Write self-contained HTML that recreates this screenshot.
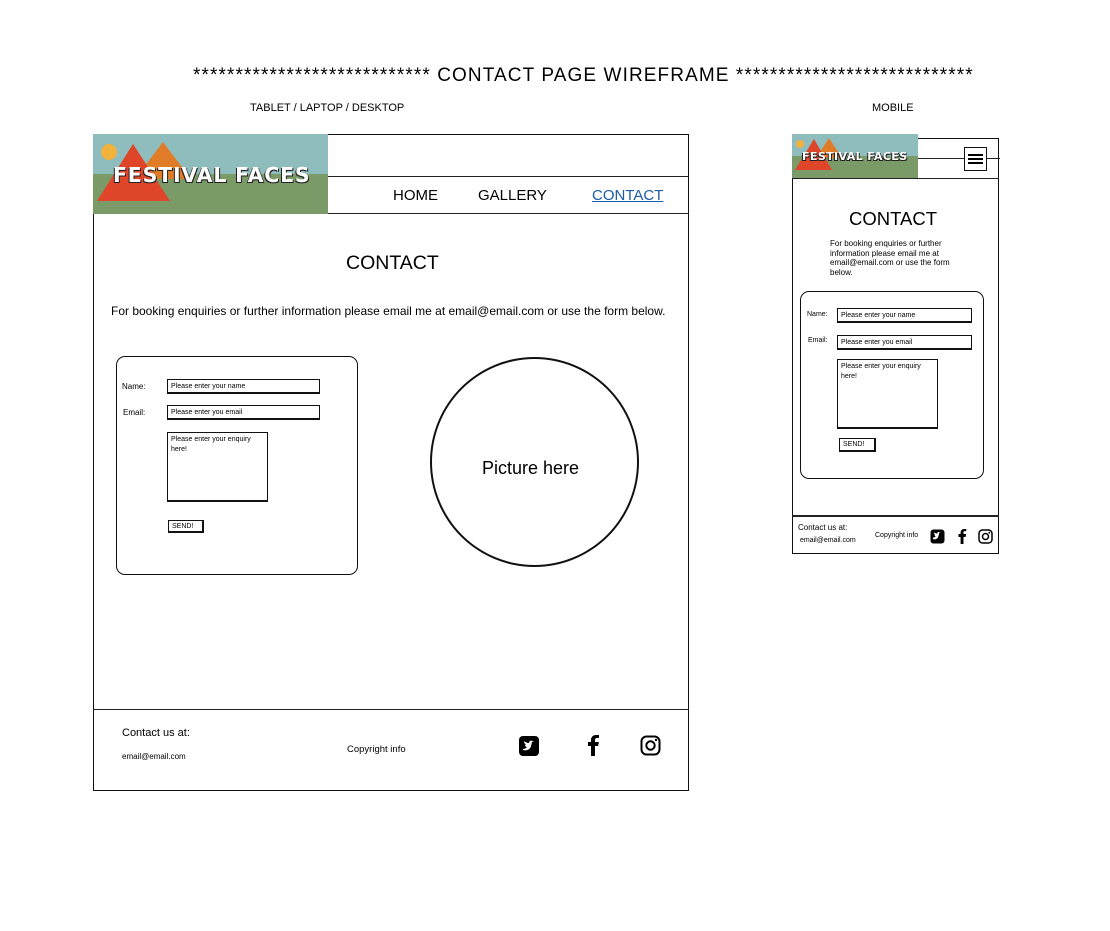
<!DOCTYPE html><html><head><style>
body{margin:0;width:1110px;height:931px;background:#fff;position:relative;font-family:"Liberation Sans",sans-serif;color:#000;overflow:hidden}
.a{position:absolute;white-space:nowrap}
.b{position:absolute;box-sizing:border-box;border:1.5px solid #111}
.in{position:absolute;box-sizing:border-box;border:1.3px solid #111;border-bottom-width:2px;font-size:7px;padding:1px 3px;line-height:10px;background:#fff}
.hl{position:absolute;height:0;border-top:1.5px solid #222}
.logo{position:absolute;overflow:hidden;background:linear-gradient(#8fbcbd 0 50%,#7a9a68 50%)}
.logo b{font-family:"DejaVu Sans",sans-serif;font-weight:900;color:#fff;position:absolute;text-shadow:1px 1px 0 #222,-1px 1px 0 #222;letter-spacing:1px}
</style></head><body>
<div class="a" style="left:193px;top:65px;font-size:19px;letter-spacing:1.1px">**************************** CONTACT PAGE WIREFRAME ****************************</div>
<div class="a" style="left:250px;top:102px;font-size:11px">TABLET / LAPTOP / DESKTOP</div>
<div class="a" style="left:872px;top:102px;font-size:11px">MOBILE</div>

<!-- desktop -->
<div class="b" style="left:93px;top:134px;width:596px;height:657px"></div>
<div class="hl" style="left:328px;top:176px;width:360px"></div>
<div class="hl" style="left:93px;top:213px;width:596px"></div>
<div class="logo" style="left:93px;top:134px;width:235px;height:80px">
<svg width="235" height="80" style="position:absolute;left:0;top:0"><circle cx="16" cy="18" r="8" fill="#f2b33d"/><polygon points="70,8 98,45 42,45" fill="#e07c27"/><polygon points="40,10 77,67 4,67" fill="#df4529"/></svg>
<b style="left:20px;top:29px;font-size:20.5px;letter-spacing:0.8px">FESTIVAL FACES</b></div>
<div class="a" style="left:393px;top:187px;font-size:15px">HOME</div>
<div class="a" style="left:478px;top:187px;font-size:15px">GALLERY</div>
<div class="a" style="left:592px;top:187px;font-size:15px;color:#1a5ca8;text-decoration:underline">CONTACT</div>
<div class="a" style="left:346px;top:252px;font-size:19.5px">CONTACT</div>
<div class="a" style="left:111px;top:304px;font-size:12px">For booking enquiries or further information please email me at email@email.com or use the form below.</div>
<div class="b" style="left:116px;top:356px;width:242px;height:219px;border-radius:9px"></div>
<div class="a" style="left:122px;top:382px;font-size:8px">Name:</div>
<div class="in" style="left:167px;top:379px;width:153px;height:15px;padding-top:2px">Please enter your name</div>
<div class="a" style="left:123px;top:408px;font-size:8px">Email:</div>
<div class="in" style="left:167px;top:405px;width:153px;height:15px;padding-top:2px">Please enter you email</div>
<div class="in" style="left:167px;top:432px;width:101px;height:70px;white-space:normal;padding-top:2px">Please enter your enquiry here!</div>
<div class="in" style="left:168px;top:520px;width:36px;height:13px;border-right-width:2.5px;font-size:7px;line-height:9px">SEND!</div>
<div class="b" style="left:430px;top:357px;width:209px;height:210px;border-radius:50%;border-width:2px"></div>
<div class="a" style="left:482px;top:458px;font-size:18px">Picture here</div>
<div class="hl" style="left:93px;top:709px;width:596px"></div>
<div class="a" style="left:122px;top:727px;font-size:11px">Contact us at:</div>
<div class="a" style="left:122px;top:752px;font-size:8px">email@email.com</div>
<div class="a" style="left:347px;top:744px;font-size:9.5px">Copyright info</div>
<svg class="a" style="left:518px;top:735px" width="22" height="22"><rect x="1" y="1" width="20" height="20" rx="4" fill="#000"/><path d="M5 15c3 1 7 0 8-4l1-4 2-1-2 0c-1-1-3 0-3 2-2 0-4-1-5-2 0 2 1 3 2 4l-1 0c0 1 1 2 2 2-1 1-2 2-4 2z" fill="#fff"/></svg>
<svg class="a" style="left:586px;top:734px" width="14" height="22"><path d="M9 22V12h3l1-4H9V6c0-1 .5-2 2-2h2V1h-3C7 1 5 3 5 6v2H2v4h3v10z" fill="#000"/></svg>
<svg class="a" style="left:640px;top:735px" width="21" height="21"><rect x="1.5" y="1.5" width="18" height="18" rx="5" fill="none" stroke="#000" stroke-width="2"/><circle cx="10.5" cy="10.5" r="4.2" fill="none" stroke="#000" stroke-width="2"/><circle cx="16" cy="5" r="1.2"/></svg>

<!-- mobile -->
<div class="b" style="left:792px;top:138px;width:207px;height:416px"></div>
<div class="hl" style="left:918px;top:158px;width:82px"></div>
<div class="hl" style="left:792px;top:178px;width:207px"></div>
<div class="logo" style="left:792px;top:134px;width:126px;height:44px">
<svg width="126" height="44" style="position:absolute;left:0;top:0"><circle cx="8" cy="10" r="4" fill="#f2b33d"/><polygon points="37,4 50,24 24,24" fill="#e07c27"/><polygon points="22,5 40,36 3,36" fill="#df4529"/></svg>
<b style="left:10px;top:16px;font-size:11px;letter-spacing:0.4px">FESTIVAL FACES</b></div>
<div class="b" style="left:964px;top:147px;width:23px;height:24px;background:#fff"></div>
<div style="position:absolute;left:968px;top:154px;width:15px;height:2px;background:#000;box-shadow:0 4px 0 #000,0 8px 0 #000"></div>
<div class="a" style="left:849px;top:208px;font-size:18.5px">CONTACT</div>
<div class="a" style="left:830px;top:239px;font-size:8px;line-height:9.5px">For booking enquiries or further<br>information please email me at<br>email@email.com or use the form<br>below.</div>
<div class="b" style="left:800px;top:291px;width:184px;height:188px;border-radius:9px"></div>
<div class="a" style="left:807px;top:311px;font-size:7px">Name:</div>
<div class="in" style="left:837px;top:308px;width:135px;height:15px;padding-top:2px">Please enter your name</div>
<div class="a" style="left:808px;top:337px;font-size:7px">Email:</div>
<div class="in" style="left:837px;top:335px;width:135px;height:15px;padding-top:2px">Please enter you email</div>
<div class="in" style="left:837px;top:359px;width:101px;height:70px;white-space:normal;padding-top:2px">Please enter your enquiry here!</div>
<div class="in" style="left:839px;top:438px;width:37px;height:14px;border-right-width:2.5px;font-size:7px;line-height:10px">SEND!</div>
<div class="hl" style="left:792px;top:515px;width:207px;border-top-width:2px"></div>
<div class="a" style="left:798px;top:523px;font-size:8px">Contact us at:</div>
<div class="a" style="left:800px;top:537px;font-size:7px">email@email.com</div>
<div class="a" style="left:875px;top:532px;font-size:7px">Copyright info</div>
<svg class="a" style="left:930px;top:529px" width="15" height="15"><rect x="0.5" y="0.5" width="14" height="14" rx="3" fill="#000"/><path d="M3 10c2 1 5 0 5.5-3l.7-3 1.3-.7-1.3 0c-.7-.7-2 0-2 1.3-1.3 0-2.7-.7-3.4-1.3 0 1.3.7 2 1.3 2.7H4.5c0 .7.7 1.3 1.3 1.3-.7.7-1.3 1.3-2.8 1.3z" fill="#fff"/></svg>
<svg class="a" style="left:957px;top:528px" width="10" height="16"><path d="M6.5 16V9h2l.7-3H6.5V4.5c0-.7.3-1.4 1.4-1.4h1.4V1H7.2C5 1 3.6 2.4 3.6 4.5V6H1.5v3h2.1v7z" fill="#000"/></svg>
<svg class="a" style="left:978px;top:529px" width="15" height="15"><rect x="1" y="1" width="13" height="13" rx="3.5" fill="none" stroke="#000" stroke-width="1.5"/><circle cx="7.5" cy="7.5" r="3" fill="none" stroke="#000" stroke-width="1.5"/><circle cx="11.3" cy="3.7" r=".9"/></svg>
</body></html>
